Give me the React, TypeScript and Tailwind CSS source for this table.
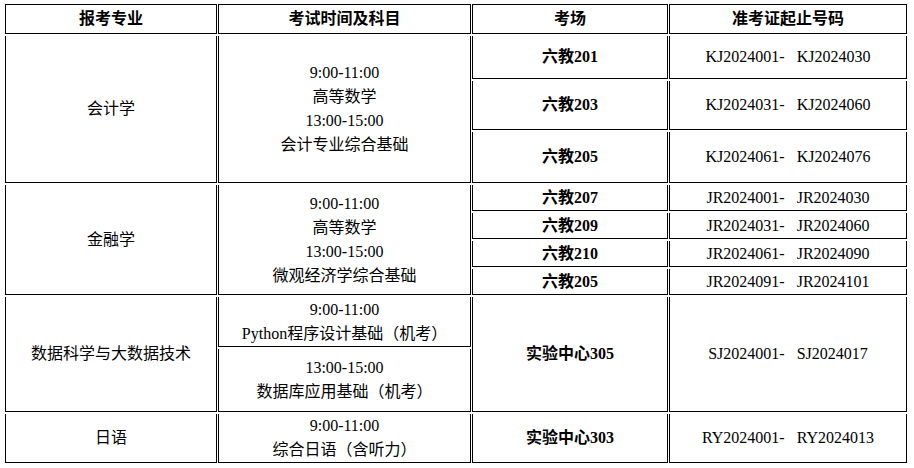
const cell = 'border-x border-b border-black text-center align-middle px-1'

const kj = [
  { room: '六教201', range: ['KJ2024001-', 'KJ2024030'], h: 'h-[43px]' },
  { room: '六教203', range: ['KJ2024031-', 'KJ2024060'], h: 'h-[49px]' },
  { room: '六教205', range: ['KJ2024061-', 'KJ2024076'], h: 'h-[51px]' },
]

const jr = [
  { room: '六教207', range: ['JR2024001-', 'JR2024030'], h: 'h-[26px]' },
  { room: '六教209', range: ['JR2024031-', 'JR2024060'], h: 'h-[26px]' },
  { room: '六教210', range: ['JR2024061-', 'JR2024090'], h: 'h-[26px]' },
  { room: '六教205', range: ['JR2024091-', 'JR2024101'], h: 'h-[26px]' },
]

function Range({ r }: { r: string[] }) {
  return <span className="whitespace-pre">{r[0] + '\u00a0\u00a0 ' + r[1]}</span>
}

export default function App() {
  return (
    <div
      className="bg-white pl-[4px] pt-[2px] text-[16px] leading-[24px] text-black"
      style={{ fontFamily: '"Liberation Serif", "Noto Sans CJK SC", serif' }}
    >
      <table className="table-fixed border-separate border-spacing-x-px border-spacing-y-0.5">
        <thead>
          <tr>
            <th className={`${cell} border-t h-[30px] w-[212px] font-bold`}>报考专业</th>
            <th className={`${cell} border-t w-[253px] font-bold`}>考试时间及科目</th>
            <th className={`${cell} border-t w-[196px] font-bold`}>考场</th>
            <th className={`${cell} border-t w-[238px] font-bold`}>准考证起止号码</th>
          </tr>
        </thead>
        <tbody>
          {kj.map((k, i) => (
            <tr key={k.room + i}>
              {i === 0 && (
                <>
                  <td rowSpan={3} className={cell}>会计学</td>
                  <td rowSpan={3} className={cell}>
                    <p>9:00-11:00</p>
                    <p>高等数学</p>
                    <p>13:00-15:00</p>
                    <p>会计专业综合基础</p>
                  </td>
                </>
              )}
              <td className={`${cell} ${k.h} font-bold`}>{k.room}</td>
              <td className={cell}><Range r={k.range} /></td>
            </tr>
          ))}
          {jr.map((k, i) => (
            <tr key={k.room + i}>
              {i === 0 && (
                <>
                  <td rowSpan={4} className={cell}>金融学</td>
                  <td rowSpan={4} className={cell}>
                    <p>9:00-11:00</p>
                    <p>高等数学</p>
                    <p>13:00-15:00</p>
                    <p>微观经济学综合基础</p>
                  </td>
                </>
              )}
              <td className={`${cell} ${k.h} font-bold leading-[20px]`}>{k.room}</td>
              <td className={`${cell} leading-[20px]`}><Range r={k.range} /></td>
            </tr>
          ))}
          <tr>
            <td rowSpan={2} className={cell}>数据科学与大数据技术</td>
            <td className={`${cell} h-[50px]`}>
              <p>9:00-11:00</p>
              <p>Python程序设计基础（机考）</p>
            </td>
            <td rowSpan={2} className={`${cell} font-bold`}>实验中心305</td>
            <td rowSpan={2} className={cell}><Range r={['SJ2024001-', 'SJ2024017']} /></td>
          </tr>
          <tr>
            <td className={`${cell} h-[63px]`}>
              <p>13:00-15:00</p>
              <p>数据库应用基础（机考）</p>
            </td>
          </tr>
          <tr>
            <td className={`${cell} h-[48px]`}>日语</td>
            <td className={cell}>
              <p>9:00-11:00</p>
              <p>综合日语（含听力）</p>
            </td>
            <td className={`${cell} font-bold`}>实验中心303</td>
            <td className={cell}><Range r={['RY2024001-', 'RY2024013']} /></td>
          </tr>
        </tbody>
      </table>
    </div>
  )
}
